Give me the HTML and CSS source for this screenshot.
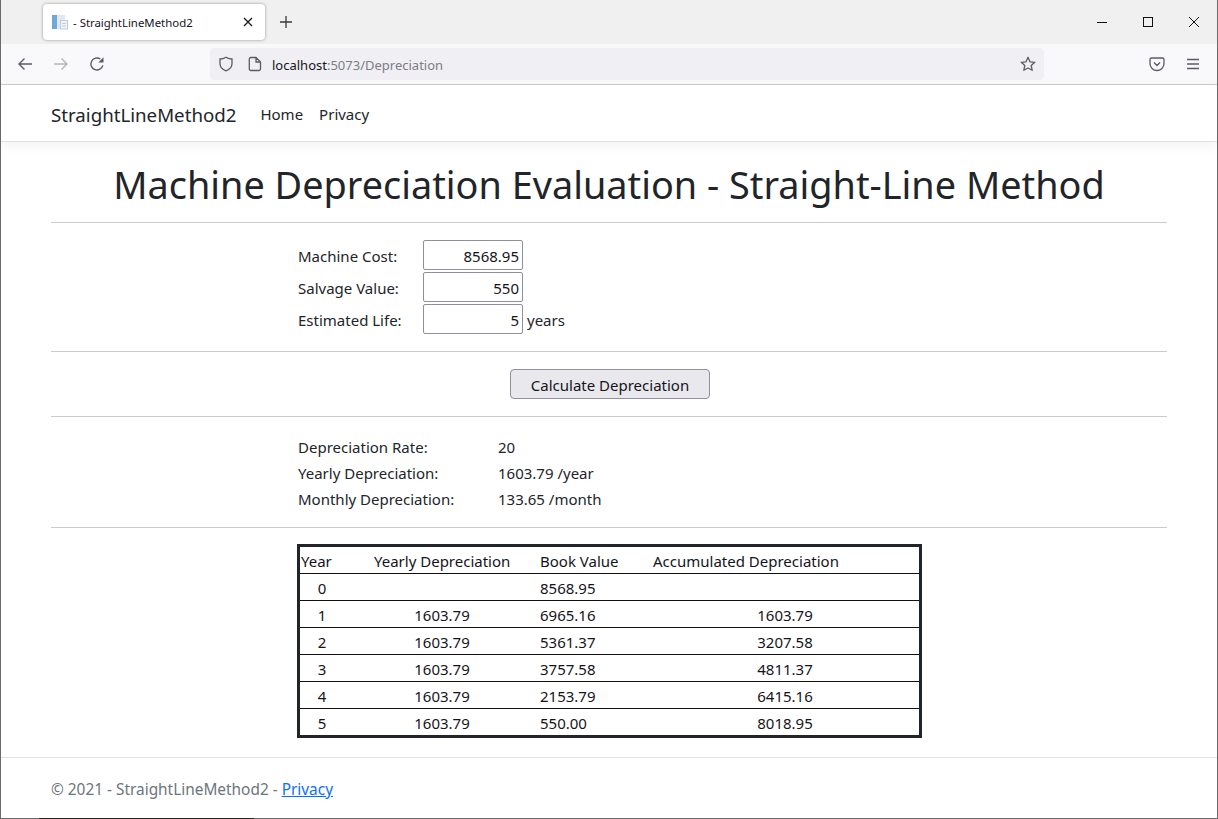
FILE: index.html
```html
<!DOCTYPE html>
<html lang="en">
<head>
  <meta charset="UTF-8">
  <title>- StraightLineMethod2</title>
  <link rel="stylesheet" href="styles.css">
</head>
<body>
  <div class="window">
    <div class="tabbar">
      <div class="tab">
        <svg class="tab-icon" width="16" height="16" viewBox="0 0 16 16">
          <rect x="0" y="1" width="5" height="14" fill="#6fa8dc"/>
          <rect x="5" y="1" width="8" height="14" fill="#e4e8ee"/>
          <rect x="8.500" y="6.500" width="7" height="8.500" fill="#f0f3f7" stroke="#c3ccd6" stroke-width="1"/>
          <path d="M10 9.500h4M10 12h4" stroke="#c3ccd6" stroke-width="1"/>
        </svg>
        <span class="tab-title">- StraightLineMethod2</span>
        <svg class="tab-close" width="10" height="10" viewBox="0 0 10 10">
          <path d="M1 1l8 8M9 1l-8 8" stroke="#15141a" stroke-width="1.200" fill="none"/>
        </svg>
      </div>
      <svg class="new-tab" width="14" height="14" viewBox="0 0 14 14">
        <path d="M7 1v12M1 7h12" stroke="#3a3a3f" stroke-width="1.300" fill="none"/>
      </svg>
      <div class="window-controls">
        <svg width="12" height="12" viewBox="0 0 12 12"><path d="M1 6.500h10" stroke="#111" stroke-width="1" fill="none"/></svg>
        <svg width="12" height="12" viewBox="0 0 12 12"><rect x="1.500" y="1.500" width="9" height="9" stroke="#111" stroke-width="1" fill="none"/></svg>
        <svg width="12" height="12" viewBox="0 0 12 12"><path d="M1 1l10 10M11 1l-10 10" stroke="#111" stroke-width="1" fill="none"/></svg>
      </div>
    </div>
    <div class="toolbar">
      <svg class="tool" width="16" height="16" viewBox="0 0 16 16"><path d="M15 8H2M7.500 2.500L2 8l5.500 5.500" stroke="#5b5b66" stroke-width="1.400" fill="none"/></svg>
      <svg class="tool" width="16" height="16" viewBox="0 0 16 16"><path d="M1 8h13M8.500 2.500L14 8l-5.500 5.500" stroke="#b4b4ba" stroke-width="1.400" fill="none"/></svg>
      <svg class="tool" width="16" height="16" viewBox="0 0 16 16"><path d="M13.800 9.300A6 6 0 1 1 11.300 3" stroke="#5b5b66" stroke-width="1.400" fill="none"/><path d="M14.500 1.300v5.200H9.300z" fill="#5b5b66"/></svg>
      <div class="urlbar">
        <svg width="16" height="16" viewBox="0 0 16 16"><path d="M8 1.200C10 2.400 12 3 14 3v4.500c0 3.700-2.800 6.200-6 7.300-3.200-1.100-6-3.600-6-7.300V3c2 0 4-.6 6-1.800z" stroke="#5b5b66" stroke-width="1.300" fill="none"/></svg>
        <svg class="page-icon" width="14" height="16" viewBox="0 0 14 16"><path d="M2.800 1.500h5.200L12.500 6v7a1.500 1.500 0 0 1-1.500 1.500H2.800A1.500 1.500 0 0 1 1.300 13V3a1.500 1.500 0 0 1 1.500-1.500zM8 1.500V6h4.500" stroke="#5b5b66" stroke-width="1.300" fill="none"/></svg>
        <span class="url"><span class="url-host">localhost</span>:5073/Depreciation</span>
        <svg class="star" width="16" height="16" viewBox="0 0 16 16"><path d="M8 1.300l2 4.500 4.800.5-3.600 3.200 1 4.800L8 12l-4.200 2.300 1-4.800L1.200 6.300 6 5.800z" stroke="#5b5b66" stroke-width="1.300" fill="none" stroke-linejoin="round"/></svg>
      </div>
      <svg class="pocket" width="16" height="16" viewBox="0 0 16 16"><path d="M2.500 2h11A1.500 1.500 0 0 1 15 3.500V7.500a7 7 0 0 1-14 0V3.500A1.500 1.500 0 0 1 2.500 2zM5 6.500L8 9.500l3-3" stroke="#5b5b66" stroke-width="1.300" fill="none"/></svg>
      <svg class="menu" width="14" height="12" viewBox="0 0 14 12"><path d="M1 1.500h12M1 6h12M1 10.500h12" stroke="#5b5b66" stroke-width="1.300" fill="none"/></svg>
    </div>

    <nav class="navbar">
      <a class="brand" href="#">StraightLineMethod2</a>
      <a class="nav-link" href="#">Home</a>
      <a class="nav-link" href="#">Privacy</a>
    </nav>

    <main class="container">
      <h1 class="title">Machine Depreciation Evaluation - Straight-Line Method</h1>
      <hr>
      <div class="block inputs">
        <div class="input-row">
          <label>Machine Cost:</label>
          <input type="text" value="8568.95">
        </div>
        <div class="input-row">
          <label>Salvage Value:</label>
          <input type="text" value="550">
        </div>
        <div class="input-row">
          <label>Estimated Life:</label>
          <input type="text" value="5">
          <span class="unit">years</span>
        </div>
      </div>
      <hr>
      <div class="actions">
        <button type="button">Calculate Depreciation</button>
      </div>
      <hr>
      <div class="block results">
        <div class="result-row"><span>Depreciation Rate:</span><span>20</span></div>
        <div class="result-row"><span>Yearly Depreciation:</span><span>1603.79 /year</span></div>
        <div class="result-row"><span>Monthly Depreciation:</span><span>133.65 /month</span></div>
      </div>
      <hr>
      <table class="schedule">
        <thead>
          <tr><th>Year</th><th>Yearly Depreciation</th><th>Book Value</th><th>Accumulated Depreciation</th></tr>
        </thead>
        <tbody>
          <tr><td>0</td><td></td><td>8568.95</td><td></td></tr>
          <tr><td>1</td><td>1603.79</td><td>6965.16</td><td>1603.79</td></tr>
          <tr><td>2</td><td>1603.79</td><td>5361.37</td><td>3207.58</td></tr>
          <tr><td>3</td><td>1603.79</td><td>3757.58</td><td>4811.37</td></tr>
          <tr><td>4</td><td>1603.79</td><td>2153.79</td><td>6415.16</td></tr>
          <tr><td>5</td><td>1603.79</td><td>550.00</td><td>8018.95</td></tr>
        </tbody>
      </table>
    </main>

    <footer class="footer">
      © 2021 - StraightLineMethod2 - <a href="#">Privacy</a>
    </footer>
    <div class="desktop-strip"></div>
  </div>
</body>
</html>
```

FILE: styles.css
```css
* {
  box-sizing: border-box;
}

html, body {
  margin: 0;
  height: 100%;
}

body {
  font-family: "Noto Sans", "Open Sans", sans-serif;
  font-size: 15px;
  color: #212529;
  background: #fff;
  overflow: hidden;
}

.window {
  height: 819px;
  border: 1px solid #6b6b6b;
  border-top: none;
  display: flex;
  flex-direction: column;
  position: relative;
}

/* bit of the desktop showing under the window */
.desktop-strip {
  position: absolute;
  left: 38px;
  bottom: -1px;
  width: 215px;
  height: 1px;
  background: #2b2224;
}

/* Browser chrome */
.tabbar {
  height: 44px;
  background: #f0f0f0;
  display: flex;
  align-items: center;
  padding-left: 42px;
}

.tab {
  width: 222px;
  height: 36px;
  background: #fff;
  border-radius: 4px;
  box-shadow: 0 0 3px rgba(0, 0, 0, 0.4);
  display: flex;
  align-items: center;
  padding: 0 12px 0 9px;
  font-size: 11.400px;
  color: #15141a;
}

.tab-title {
  margin-left: 5px;
  flex: 1;
}

.new-tab {
  margin-left: 14px;
}

.window-controls {
  margin-left: auto;
  display: flex;
  gap: 34px;
  padding-right: 17px;
}

.toolbar {
  height: 41px;
  background: #f9f9fb;
  border-bottom: 1px solid #ccc;
  display: flex;
  align-items: center;
  padding-left: 16px;
}

.tool {
  margin-right: 20px;
}

.urlbar {
  width: 834px;
  height: 32px;
  margin-left: 85px;
  background: #f0f0f4;
  border-radius: 4px;
  display: flex;
  align-items: center;
  padding: 0 8px;
}

.page-icon {
  margin-left: 14px;
}

.url {
  margin-left: 10px;
  padding-top: 2px;
  font-size: 13px;
  color: #7c7c84;
  flex: 1;
}

.url-host {
  color: #15141a;
}

.pocket {
  margin-left: 105px;
}

.menu {
  margin-left: 21px;
}

/* Page */
.navbar {
  height: 57px;
  background: #fff;
  border-bottom: 1px solid #dee2e6;
  box-shadow: 0 4px 12px rgba(0, 0, 0, 0.05);
  display: flex;
  align-items: center;
  padding: 3px 50px 0;
  position: relative;
}

.navbar a {
  color: #212529;
  text-decoration: none;
}

.brand {
  font-size: 18.700px;
  margin-right: 24px;
}

.nav-link {
  margin: -2px 16px 0 0;
}

.container {
  flex: 1;
  padding: 0 50px;
}

.title {
  font-size: 37.850px;
  font-weight: 400;
  text-align: center;
  margin: 14px 0 8px;
  line-height: 58px;
}

hr {
  border: none;
  border-top: 1px solid #ccc;
  margin: 0;
}

.block {
  margin-left: 247px;
}

.inputs {
  padding: 17px 0;
  display: flex;
  flex-direction: column;
  gap: 2px;
}

.input-row {
  display: flex;
  align-items: center;
  height: 30px;
}

.input-row label {
  width: 125px;
  padding-top: 2px;
}

.input-row input {
  width: 100px;
  height: 30px;
  border: 1px solid #8f8f9d;
  border-radius: 2px;
  padding: 2px 3px 0;
  text-align: right;
  font: inherit;
  color: #15141a;
}

.unit {
  margin-left: 4px;
  padding-top: 2px;
}

.actions {
  height: 64px;
  display: flex;
  justify-content: center;
  align-items: center;
  padding-left: 2px;
}

.actions button {
  width: 200px;
  height: 30px;
  padding-top: 2px;
  background: #e9e9ed;
  border: 1px solid #8f8f9d;
  border-radius: 4px;
  font: inherit;
  color: #15141a;
}

.results {
  padding: 17px 0 15px;
}

.result-row {
  display: flex;
  height: 26px;
  align-items: center;
}

.result-row span:first-child {
  width: 200px;
}

.schedule {
  width: 625px;
  margin: 16px 0 0 246px;
  border: 3px solid #212529;
  border-collapse: separate;
  border-spacing: 0;
  table-layout: fixed;
  color: #15141a;
}

.schedule th,
.schedule td {
  height: 27px;
  padding: 2px 0 0;
  font-weight: 400;
  border-top: 1px solid #111;
}

.schedule th {
  height: 26px;
  border-top: none;
  text-align: left;
}

.schedule th:nth-child(1), .schedule td:nth-child(1) { width: 46px; }
.schedule th:nth-child(2), .schedule td:nth-child(2) { width: 194px; }
.schedule th:nth-child(3), .schedule td:nth-child(3) { width: 113px; }

.schedule td:nth-child(1),
.schedule td:nth-child(2),
.schedule td:nth-child(4) {
  text-align: center;
}

.schedule td:nth-child(1),
.schedule td:nth-child(2),
.schedule td:nth-child(4) {
  padding-right: 2px;
}

.schedule th:nth-child(1) {
  padding-left: 1px;
}

.schedule th:nth-child(2) {
  padding-left: 28px;
}

.footer {
  height: 61px;
  border-top: 1px solid #dee2e6;
  padding: 21px 50px 0;
  font-size: 15.400px;
  color: #6c757d;
}

.footer a {
  color: #0d6efd;
}
```
